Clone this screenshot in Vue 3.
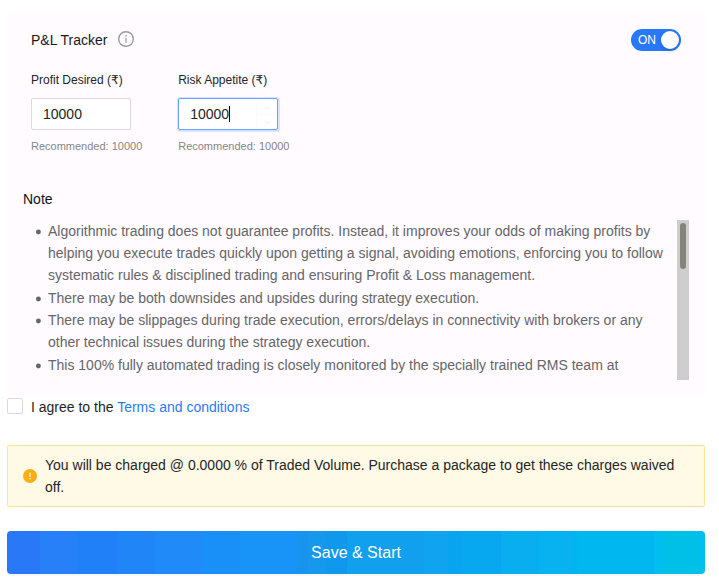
<script setup>
import { ref } from 'vue'

const profit = ref('10000')
const risk = ref('10000')
const notes = [
  { lines: ['Algorithmic trading does not guarantee profits. Instead, it improves your odds of making profits by', 'helping you execute trades quickly upon getting a signal, avoiding emotions, enforcing you to follow', 'systematic rules & disciplined trading and ensuring Profit & Loss management.'] },
  { lines: ['There may be both downsides and upsides during strategy execution.'] },
  { lines: ['There may be slippages during trade execution, errors/delays in connectivity with brokers or any', 'other technical issues during the strategy execution.'] },
  { lines: ['This 100% fully automated trading is closely monitored by the specially trained RMS team at'] },
]
</script>

<template>
  <main class="page">
    <section class="panel">
      <header class="head">
        <span class="title">P&amp;L Tracker</span>
        <svg class="info" viewBox="0 0 16 16" width="16" height="16">
          <circle cx="8" cy="8" r="7.3" fill="none" stroke="#999a9c" stroke-width="1.4" />
          <rect x="7.3" y="4" width="1.4" height="1.6" fill="#a8a8aa" />
          <rect x="7.3" y="6.7" width="1.4" height="5.2" fill="#a8a8aa" />
        </svg>
        <button class="switch" type="button" role="switch" aria-checked="true">
          <span>ON</span><i class="knob"></i>
        </button>
      </header>
      <div class="fields">
        <div class="field">
          <label>Profit Desired (<span class="rupee">₹</span>)</label>
          <div class="input">{{ profit }}</div>
          <small>Recommended: 10000</small>
        </div>
        <div class="field">
          <label>Risk Appetite (<span class="rupee">₹</span>)</label>
          <div class="input focused">
            {{ risk }}<i class="caret"></i>
            <span class="stepper">
              <svg viewBox="0 0 21 30" width="21" height="30">
                <path d="M0.5 0V30M0.5 15.5H21" fill="none" stroke="#fafafa" />
                <path d="M9 10.5l2.5-3 2.5 3M9 22l2.5 3 2.5-3" fill="none" stroke="#e9e9e9" stroke-width="0.8" />
              </svg>
            </span>
          </div>
          <small>Recommended: 10000</small>
        </div>
      </div>
      <h2 class="note-title">Note</h2>
      <div class="notes">
        <ul>
          <li v-for="(note, i) in notes" :key="i" :class="{ multi: note.lines.length > 1 }">
            <svg class="dot" viewBox="0 0 6 6" width="6" height="6"><circle cx="3.4" cy="3" r="2.45" fill="#656668" /></svg>
            <div><div v-for="line in note.lines" :key="line">{{ line }}</div></div>
          </li>
        </ul>
        <div class="track"><div class="thumb"></div></div>
      </div>
    </section>

    <div class="agree">
      <span class="checkbox"></span>
      <span>I agree to the <a>Terms and conditions</a></span>
    </div>

    <div class="alert">
      <svg viewBox="0 0 14 14" width="14" height="14">
        <circle cx="7" cy="7" r="7" fill="#ffad14" />
        <rect x="6.4" y="3.4" width="1.2" height="4.6" rx=".3" fill="#fffbe6" />
        <circle cx="7" cy="9.8" r=".8" fill="#fffbe6" />
      </svg>
      <p>You will be charged @ 0.0000 % of Traded Volume. Purchase a package to get these charges waived off.</p>
    </div>

    <button class="save" type="button">Save &amp; Start</button>
  </main>
</template>

<style>
body { background: #fff; }
</style>

<style scoped>
* { box-sizing: border-box; }
.page {
  width: 719px;
  height: 585px;
  padding: 13px 14px 0 7px;
  overflow: hidden;
  font-family: "Liberation Sans", Arial, sans-serif;
  font-size: 14px;
  line-height: 22px;
  color: #242526;
}
button { border: 0; font-family: inherit; }
.panel {
  height: 383px;
  padding: 16px 16px 0;
  background: #fffbff;
}
.head {
  display: flex;
  align-items: center;
  height: 22px;
  padding: 0 8px;
}
.title { color: #18191a; }
.info { margin: -2px 0 0 10px; }
.switch {
  display: flex;
  align-items: center;
  justify-content: space-between;
  width: 50px;
  height: 22px;
  margin-left: auto;
  padding: 0 2px 0 7px;
  border-radius: 11px;
  background: #2878f8;
  color: #fff;
  font-size: 12px;
}
.knob {
  width: 18px;
  height: 18px;
  border-radius: 50%;
  background: #fff;
  box-shadow: 0 2px 4px rgba(0, 35, 11, .2);
}
.fields {
  display: flex;
  gap: 36px;
  padding: 18px 8px 0;
}
.field {
  display: flex;
  flex-direction: column;
  width: 111.2px;
}
.field label {
  height: 22px;
  font-size: 12px;
  white-space: nowrap;
}
.rupee {
  font-family: "DejaVu Sans", sans-serif;
  line-height: 1;
}
.input {
  display: flex;
  align-items: center;
  width: 100px;
  height: 32px;
  margin-top: 7px;
  padding-left: 11px;
  border: 1px solid #dcd9de;
  border-radius: 2px;
  background: #fff;
}
.focused {
  border-color: #68a2fa;
  box-shadow: .5px .5px 0 1.5px rgba(40, 120, 248, .18);
}
.caret {
  width: 1px;
  height: 16px;
  background: #000;
}
.stepper {
  width: 21px;
  height: 30px;
  margin-left: auto;
}
.stepper svg { display: block; }
.field small {
  margin-top: 5px;
  font-size: 11px;
  color: #858688;
  white-space: nowrap;
}
.note-title {
  margin: 31px 0 0;
  color: #111213;
  font-size: 14px;
  font-weight: 400;
}
.notes {
  display: flex;
  justify-content: space-between;
  height: 160px;
  margin-top: 10px;
}
ul {
  margin: 0;
  padding: 0 0 0 12px;
  list-style: none;
  color: #656668;
}
li {
  display: flex;
  gap: 7px;
  white-space: nowrap;
}
li.multi { padding-bottom: 1px; }
.dot { margin-top: 9px; }
.track {
  width: 12px;
  padding: 3px;
  background: #cecece;
}
.thumb {
  width: 6px;
  height: 46px;
  border-radius: 3px;
  background: #85837b;
}
.agree {
  display: flex;
  gap: 8px;
  height: 22px;
}
.checkbox {
  width: 16px;
  height: 16px;
  margin-top: 2px;
  border: 1px solid #d9d9d9;
  border-radius: 2px;
  background: #fff;
}
.agree a { color: #2a7cf8; }
.alert {
  display: flex;
  align-items: center;
  gap: 8px;
  height: 62px;
  margin-top: 27px;
  padding: 0 15px;
  border: 1px solid #ffe58f;
  border-radius: 2px;
  background: #fffae6;
}
.alert svg { flex: none; }
.alert p { margin: 0; }
.save {
  display: block;
  width: 698px;
  height: 43px;
  margin-top: 24px;
  border-radius: 4px;
  color: #fff;
  font-size: 16px;
  line-height: 24px;
  background: linear-gradient(90deg,
    #2878f8 0 33px, #2880f8 33px 70px, #2080f8 70px 110px, #2086f8 110px 148px,
    #208af8 148px 194px, #1890f8 194px 233px, #1894f8 233px 290px,
    #1894ee 290px 301px, #1898ec 301px 318px, #1098ec 318px 340px, #10a0ee 340px 417px,
    #10a4f0 417px 441px, #08a4f0 441px 455px, #08a8f0 455px 494px, #08aef0 494px 532px,
    #08b2f0 532px 565px, #00b4f0 565px 570px, #00b7f0 570px 647px, #00bef0 647px 654px,
    #00c0e8 654px 693px, #00c0f0 693px);
  box-shadow: 0 2px 0 rgba(0, 0, 0, .03);
}
</style>
